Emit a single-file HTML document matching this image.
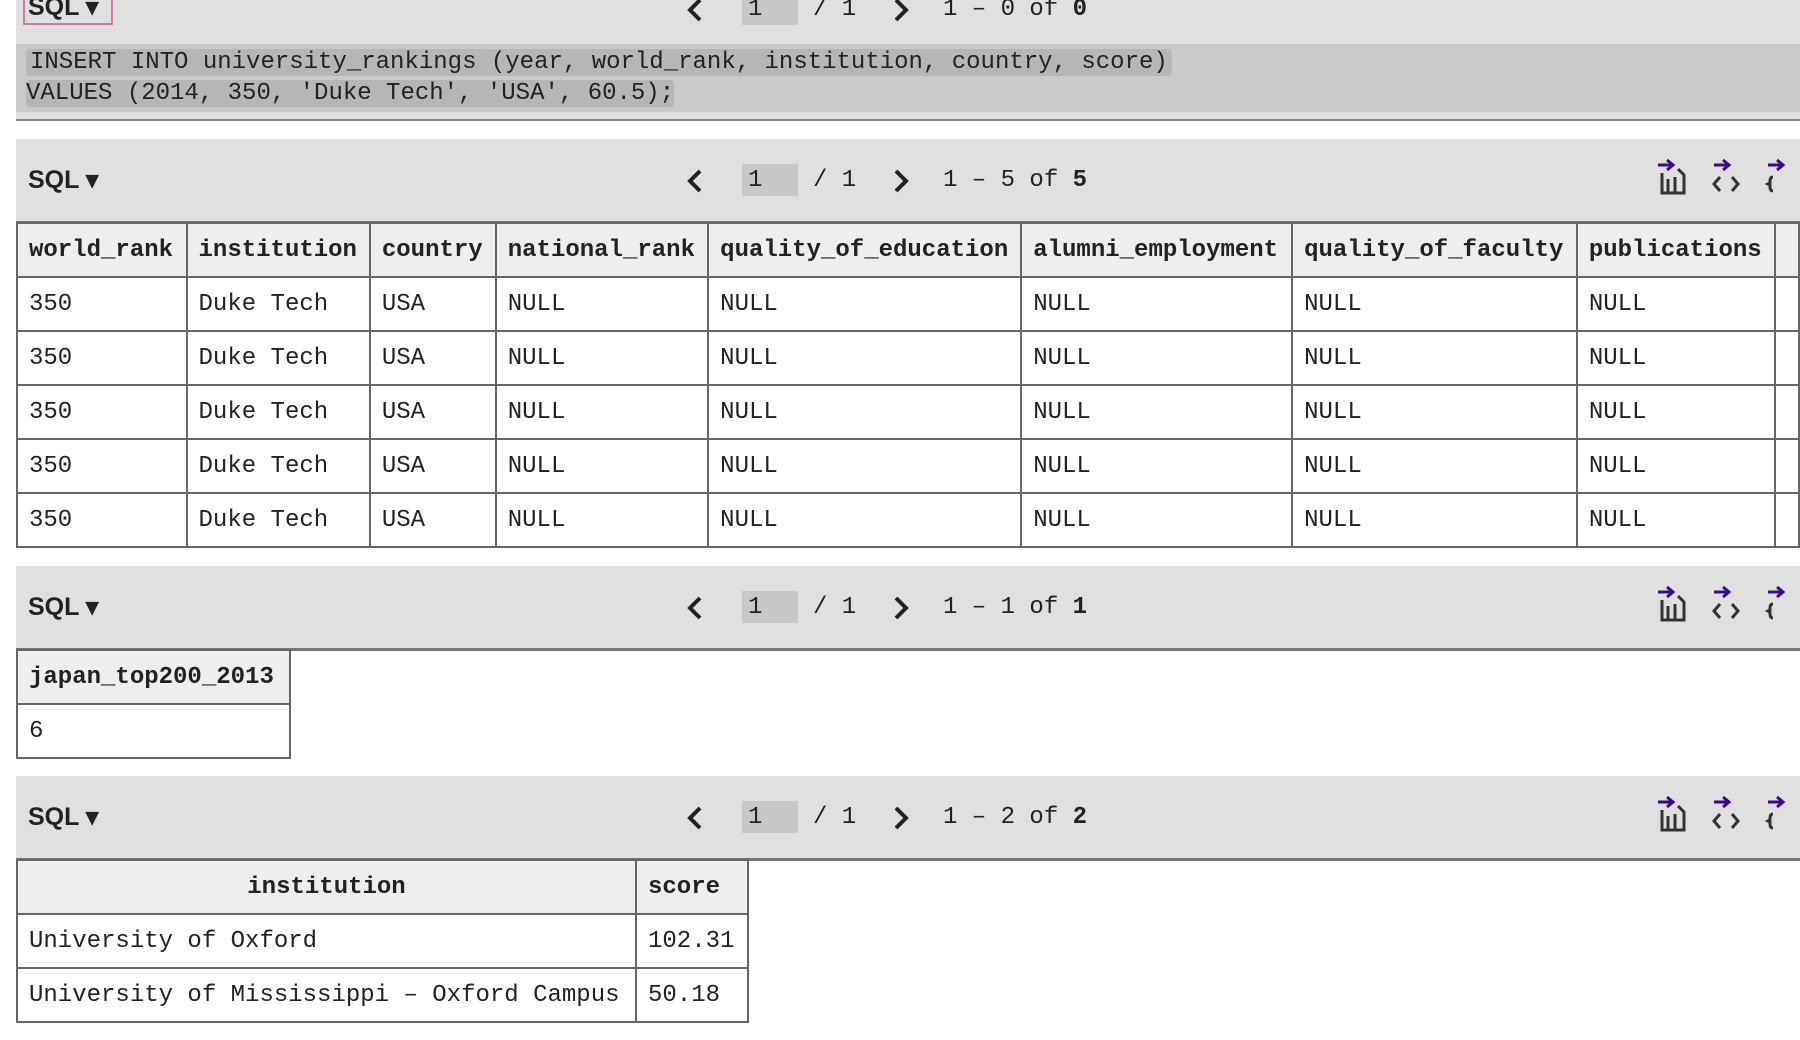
<!DOCTYPE html>
<html><head><meta charset="utf-8"><style>
*{margin:0;padding:0;box-sizing:border-box}
body{width:1800px;height:1040px;overflow:hidden;background:#fff;font-family:"Liberation Mono",monospace;color:#222;position:relative}
.bar{position:absolute;left:16px;width:1784px;background:#e0e0e0;border-bottom:3px solid #777}
.sql{position:absolute;left:12px;font:bold 25px "Liberation Sans",sans-serif;color:#222}
.pg{position:absolute;left:0;width:1200px;height:40px;font-size:24px;color:#222;white-space:nowrap}
.pg svg{position:absolute;top:3px}
.pg .inp{position:absolute;left:726px;top:-1px;width:56px;height:32px;background:#c8c8c8;padding-left:6px;line-height:34px}
.ic{position:absolute;color:#333}
table{position:absolute;left:16px;border-collapse:collapse;font-size:24px}
td,th{border:2px solid #666;height:54px;padding:0 11px;text-align:left;white-space:nowrap}
th{background:#eee;font-weight:bold}
</style></head><body>

<div class="bar" style="top:-40px;height:161px;border-bottom:2px solid #888">
  <div style="position:absolute;left:7px;top:30px;width:90px;height:35px;border:2px solid #d47aa8"></div>
  <div class="sql" style="top:32px">SQL ▾</div>
  <div class="pg" style="top:34px">
    <svg style="left:669px" width="20" height="26" viewBox="0 0 20 26"><path d="M15 3L5 13l10 10" fill="none" stroke="#222" stroke-width="4"/></svg>
    <span class="inp">1</span>
    <span style="position:absolute;left:797px;top:2px">/ 1</span>
    <svg style="left:875px" width="20" height="26" viewBox="0 0 20 26"><path d="M5 3l10 10L5 23" fill="none" stroke="#222" stroke-width="4"/></svg>
    <span style="position:absolute;left:927px;top:2px">1 – 0 of <b>0</b></span>
  </div>
  <div style="position:absolute;left:0;top:84px;width:1784px;height:68px;background:#c9c9c9"></div>
  <div style="position:absolute;left:10px;top:87px;font-size:24px;line-height:31px;color:#222">
    <span style="background:#b6b6b6;padding:0 4px;border-radius:4px">INSERT INTO university_rankings (year, world_rank, institution, country, score)</span><br>
    <span style="background:#b6b6b6;border-radius:4px">VALUES (2014, 350, 'Duke Tech', 'USA', 60.5);</span>
  </div>
</div>

<div class="bar" style="top:139px;height:85px">
  <div class="sql" style="top:26px">SQL ▾</div>
  <div class="pg" style="top:26px">
    <svg style="left:669px" width="20" height="26" viewBox="0 0 20 26"><path d="M15 3L5 13l10 10" fill="none" stroke="#222" stroke-width="4"/></svg>
    <span class="inp">1</span>
    <span style="position:absolute;left:797px;top:2px">/ 1</span>
    <svg style="left:875px" width="20" height="26" viewBox="0 0 20 26"><path d="M5 3l10 10L5 23" fill="none" stroke="#222" stroke-width="4"/></svg>
    <span style="position:absolute;left:927px;top:2px">1 – 5 of <b>5</b></span>
  </div>
  <svg class="ic" style="left:1640px;top:18px" width="150" height="40" viewBox="0 0 150 40">
    <g fill="none" stroke="#3b0a8c" stroke-width="3"><path d="M2 8h14M11 3l6 5-6 5"/><path d="M58 8h14M67 3l6 5-6 5"/><path d="M112 8h14M121 3l6 5-6 5"/></g>
    <g fill="none" stroke="#333" stroke-width="3"><path d="M6 16v20h22V18l-6-6M12 22v14M19 20v16"/><path d="M64 20l-6 7 6 7M76 20l6 7-6 7"/><path d="M117 20q-3 0-3 4v2l-2 1 2 1v2q0 4 3 4"/></g>
  </svg>
</div>
<table style="top:222px">
<tr><th style="width:174px">world_rank</th><th style="width:186px">institution</th><th style="width:129px">country</th><th style="width:216px">national_rank</th><th style="width:316px">quality_of_education</th><th style="width:277px">alumni_employment</th><th style="width:289px">quality_of_faculty</th><th style="width:202px">publications</th><th style="width:20px"></th></tr>
<tr><td>350</td><td>Duke Tech</td><td>USA</td><td>NULL</td><td>NULL</td><td>NULL</td><td>NULL</td><td>NULL</td><td></td></tr>
<tr><td>350</td><td>Duke Tech</td><td>USA</td><td>NULL</td><td>NULL</td><td>NULL</td><td>NULL</td><td>NULL</td><td></td></tr>
<tr><td>350</td><td>Duke Tech</td><td>USA</td><td>NULL</td><td>NULL</td><td>NULL</td><td>NULL</td><td>NULL</td><td></td></tr>
<tr><td>350</td><td>Duke Tech</td><td>USA</td><td>NULL</td><td>NULL</td><td>NULL</td><td>NULL</td><td>NULL</td><td></td></tr>
<tr><td>350</td><td>Duke Tech</td><td>USA</td><td>NULL</td><td>NULL</td><td>NULL</td><td>NULL</td><td>NULL</td><td></td></tr>
</table>

<div class="bar" style="top:566px;height:85px">
  <div class="sql" style="top:26px">SQL ▾</div>
  <div class="pg" style="top:26px">
    <svg style="left:669px" width="20" height="26" viewBox="0 0 20 26"><path d="M15 3L5 13l10 10" fill="none" stroke="#222" stroke-width="4"/></svg>
    <span class="inp">1</span>
    <span style="position:absolute;left:797px;top:2px">/ 1</span>
    <svg style="left:875px" width="20" height="26" viewBox="0 0 20 26"><path d="M5 3l10 10L5 23" fill="none" stroke="#222" stroke-width="4"/></svg>
    <span style="position:absolute;left:927px;top:2px">1 – 1 of <b>1</b></span>
  </div>
  <svg class="ic" style="left:1640px;top:18px" width="150" height="40" viewBox="0 0 150 40">
    <g fill="none" stroke="#3b0a8c" stroke-width="3"><path d="M2 8h14M11 3l6 5-6 5"/><path d="M58 8h14M67 3l6 5-6 5"/><path d="M112 8h14M121 3l6 5-6 5"/></g>
    <g fill="none" stroke="#333" stroke-width="3"><path d="M6 16v20h22V18l-6-6M12 22v14M19 20v16"/><path d="M64 20l-6 7 6 7M76 20l6 7-6 7"/><path d="M117 20q-3 0-3 4v2l-2 1 2 1v2q0 4 3 4"/></g>
  </svg>
</div>
<table style="top:649px">
<tr><th style="width:273px">japan_top200_2013</th></tr>
<tr><td>6</td></tr>
</table>

<div class="bar" style="top:776px;height:85px">
  <div class="sql" style="top:26px">SQL ▾</div>
  <div class="pg" style="top:26px">
    <svg style="left:669px" width="20" height="26" viewBox="0 0 20 26"><path d="M15 3L5 13l10 10" fill="none" stroke="#222" stroke-width="4"/></svg>
    <span class="inp">1</span>
    <span style="position:absolute;left:797px;top:2px">/ 1</span>
    <svg style="left:875px" width="20" height="26" viewBox="0 0 20 26"><path d="M5 3l10 10L5 23" fill="none" stroke="#222" stroke-width="4"/></svg>
    <span style="position:absolute;left:927px;top:2px">1 – 2 of <b>2</b></span>
  </div>
  <svg class="ic" style="left:1640px;top:18px" width="150" height="40" viewBox="0 0 150 40">
    <g fill="none" stroke="#3b0a8c" stroke-width="3"><path d="M2 8h14M11 3l6 5-6 5"/><path d="M58 8h14M67 3l6 5-6 5"/><path d="M112 8h14M121 3l6 5-6 5"/></g>
    <g fill="none" stroke="#333" stroke-width="3"><path d="M6 16v20h22V18l-6-6M12 22v14M19 20v16"/><path d="M64 20l-6 7 6 7M76 20l6 7-6 7"/><path d="M117 20q-3 0-3 4v2l-2 1 2 1v2q0 4 3 4"/></g>
  </svg>
</div>
<table style="top:859px">
<tr><th style="width:619px;text-align:center">institution</th><th style="width:112px">score</th></tr>
<tr><td>University of Oxford</td><td>102.31</td></tr>
<tr><td>University of Mississippi – Oxford Campus</td><td>50.18</td></tr>
</table>
</body></html>
